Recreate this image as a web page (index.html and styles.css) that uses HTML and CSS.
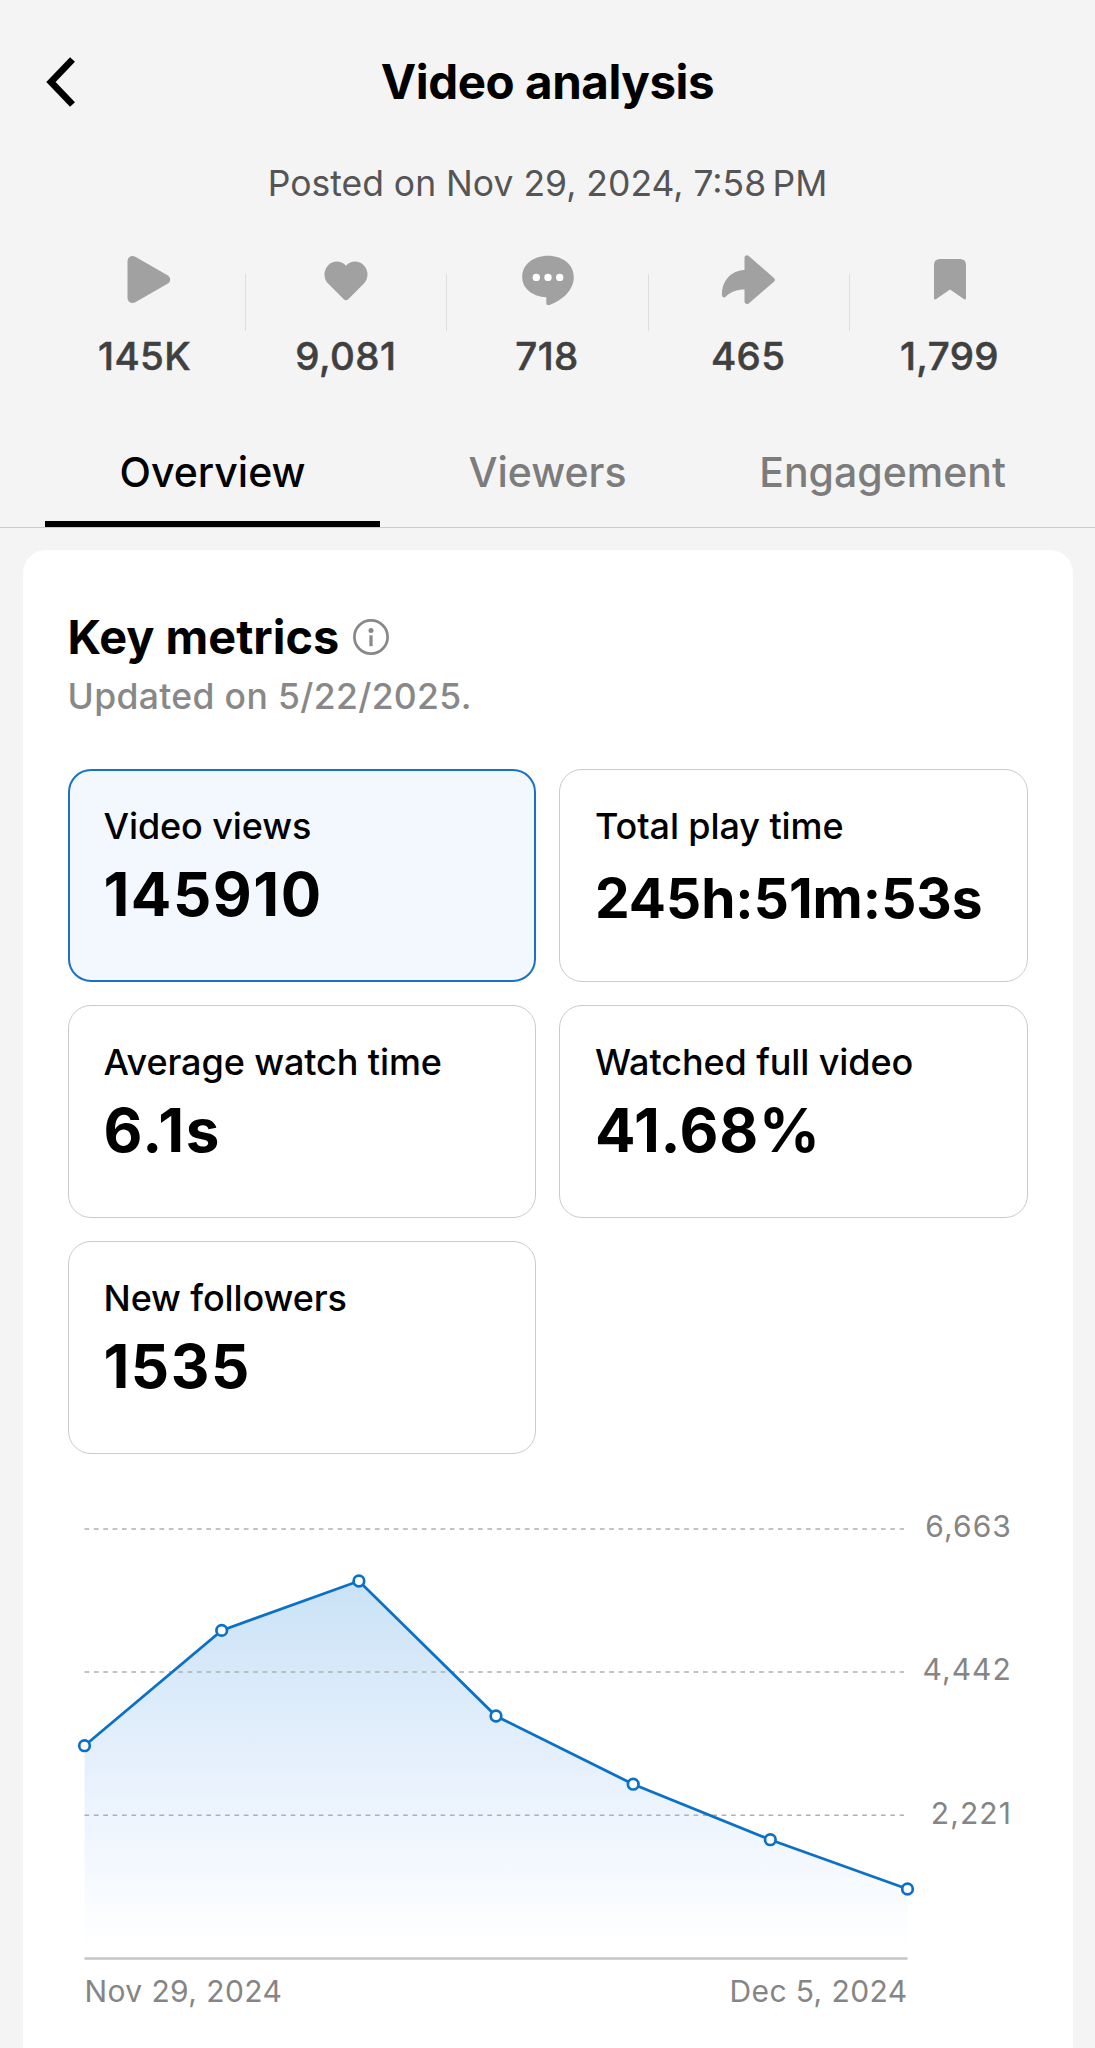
FILE: index.html
```
<!DOCTYPE html>
<html>

<head>
    <meta charset="UTF-8">
    <title>Video analysis</title>
    <link rel="stylesheet" href="styles.css">
</head>

<body>
    <div class="header">
        <svg class="back" width="34" height="56" viewBox="0 0 34 56">
            <path d="M27.5 5.5 L6 28 L27.5 50.5" />
        </svg>
        <h1 class="title">Video analysis</h1>
    </div>
    <div class="posted">Posted on Nov 29, 2024, 7:58&#8239;PM</div>

    <div class="stats">
        <div class="stat">
            <svg class="stat_icon" viewBox="0 0 60 60">
                <path d="M12.5 11.5 C12.5 7 16.5 4.7 20.3 6.8 L52.5 25.2 C56 27.3 56 31.7 52.5 33.8 L20.3 52.2 C16.5 54.3 12.5 52 12.5 47.5 Z" />
            </svg>
            <div class="stat_num">145K</div>
        </div>
        <div class="line"></div>
        <div class="stat">
            <svg class="stat_icon" viewBox="0 0 60 60">
                <path d="M30 15.7 C25 10.3 17 10.3 12.3 15.2 C7.2 20.5 7.2 28.5 12.3 33.8 L27.8 49.2 Q30 51.5 32.2 49.2 L47.7 33.8 C52.8 28.5 52.8 20.5 47.7 15.2 C43 10.3 35 10.3 30 15.7 Z" />
            </svg>
            <div class="stat_num">9,081</div>
        </div>
        <div class="line"></div>
        <div class="stat">
            <svg class="stat_icon" viewBox="0 0 60 60">
                <path d="M30 5.7 C44.5 5.7 55.8 14.3 55.8 27 C55.8 40 44.5 50.5 31.5 54.9 C29.5 55.5 28.3 54.8 28.3 53 V47.2 C14.5 46.6 4.2 38.5 4.2 27 C4.2 14.3 15.5 5.7 30 5.7 Z" />
                <circle class="dot" cx="18.3" cy="27.4" r="3.7" />
                <circle class="dot" cx="30" cy="27.4" r="3.7" />
                <circle class="dot" cx="41.7" cy="27.4" r="3.7" />
            </svg>
            <div class="stat_num">718</div>
        </div>
        <div class="line"></div>
        <div class="stat">
            <svg class="stat_icon" viewBox="0 0 60 60">
                <path d="M25.5 20 V8 C25.5 5.2 28.1 4.3 30 6.2 L54.9 28 C56.3 29.2 56.3 30.6 54.9 31.8 L30 53.2 C28.1 55 25.5 54 25.5 51.3 V39.5 C18 39.5 11.5 41.8 7 46.5 C5 48.4 3 47.5 3 44.5 C3 31.5 11 20.8 25.5 20 Z" />
            </svg>
            <div class="stat_num">465</div>
        </div>
        <div class="line"></div>
        <div class="stat">
            <svg class="stat_icon" viewBox="0 0 60 60">
                <path d="M20 9 H40 Q46 9 46 15 V47.8 Q46 50.3 43.8 48.9 L30 39.5 L16.2 48.9 Q14 50.3 14 47.8 V15 Q14 9 20 9 Z" />
            </svg>
            <div class="stat_num">1,799</div>
        </div>
    </div>

    <div class="tabs">
        <div class="tab active">Overview</div>
        <div class="tab">Viewers</div>
        <div class="tab">Engagement</div>
    </div>

    <div class="card">
        <div class="card_head">
            <h2 class="card_title">Key metrics</h2>
            <svg class="info" width="38" height="38" viewBox="0 0 38 38">
                <circle class="ring" cx="19" cy="19" r="16.6" />
                <circle cx="19" cy="12.4" r="2.5" />
                <rect x="17.4" y="17.4" width="3.2" height="10.8" />
            </svg>
        </div>
        <div class="updated">Updated on 5/22/2025.</div>

        <div class="metrics">
            <div class="metric selected">
                <div class="metric_name">Video views</div>
                <div class="metric_val">145910</div>
            </div>
            <div class="metric">
                <div class="metric_name">Total play time</div>
                <div class="metric_val long">245h:51m:53s</div>
            </div>
            <div class="metric">
                <div class="metric_name">Average watch time</div>
                <div class="metric_val">6.1s</div>
            </div>
            <div class="metric">
                <div class="metric_name">Watched full video</div>
                <div class="metric_val percent">41.68%</div>
            </div>
            <div class="metric">
                <div class="metric_name">New followers</div>
                <div class="metric_val">1535</div>
            </div>
        </div>

        <svg class="chart" width="960" height="540" viewBox="0 0 960 540">
            <defs>
                <linearGradient id="fade" x1="0" y1="0" x2="0" y2="1">
                    <stop offset="0" stop-color="#0075d5" stop-opacity="0.21" />
                    <stop offset="1" stop-color="#2070f0" stop-opacity="0" />
                </linearGradient>
            </defs>
            <polygon fill="url(#fade)" points="16.5,255.7 153.7,140.4 290.9,91 428,226 565.2,294.2 702.3,349.7 839.5,399 839.5,458 16.5,458" />
            <!-- grid -->
            <path class="grid" d="M16.5 39 H836 M16.5 182 H836 M16.5 325.3 H836" />
            <path class="axis" d="M16.5 468.5 H839.5" />
            <!-- views per day -->
            <polyline class="trend" points="16.5,255.7 153.7,140.4 290.9,91 428,226 565.2,294.2 702.3,349.7 839.5,399" />
            <g class="points">
                <circle cx="16.5" cy="255.7" r="5.3" />
                <circle cx="153.7" cy="140.4" r="5.3" />
                <circle cx="290.9" cy="91" r="5.3" />
                <circle cx="428" cy="226" r="5.3" />
                <circle cx="565.2" cy="294.2" r="5.3" />
                <circle cx="702.3" cy="349.7" r="5.3" />
                <circle cx="839.5" cy="399" r="5.3" />
            </g>
            <text class="num" x="944" y="47">6,663</text>
            <text class="num" x="944" y="190">4,442</text>
            <text class="num" x="944" y="333.5">2,221</text>
            <text class="date" x="16.5" y="512.3">Nov 29, 2024</text>
            <text class="date end" x="839.5" y="512.3">Dec 5, 2024</text>
        </svg>
    </div>
</body>

</html>
```
FILE: styles.css
```
body {
    margin: 0;
    background-color: #f4f4f4;
    font-family: Inter, "Liberation Sans", sans-serif;
    color: #000;
    overflow: hidden;
}

h1,
h2 {
    margin: 0;
}

.header {
    display: grid;
    grid-template-columns: 1fr auto 1fr;
    align-items: center;
    height: 153px;
    padding: 5px 45px 1px;
}

.back {
    fill: none;
    stroke: #000;
    stroke-width: 6.8;
}

.title {
    font-size: 47.5px;
    line-height: 60px;
    letter-spacing: -0.45px;
}

.posted {
    font-size: 35.5px;
    line-height: 50px;
    text-align: center;
    color: #555;
}

.stats {
    display: flex;
    padding: 41px 45px 0;
}

.stat {
    flex: 1;
    text-align: center;
}

.stat_icon {
    display: block;
    width: 60px;
    height: 60px;
    margin: 0 auto 21px;
    fill: #a1a1a1;
}

.dot {
    fill: #fff;
}

.stat_num {
    padding-right: 1px;
    font-size: 38.5px;
    font-weight: 500;
    line-height: 50px;
    letter-spacing: 0.4px;
    color: #404040;
    -webkit-text-stroke: 0.5px #404040;
}

.line {
    width: 1px;
    height: 57px;
    margin-top: 24px;
    background-color: #dedede;
}

.tabs {
    display: flex;
    margin-top: 42px;
    padding: 0 45px;
    border-bottom: 1px solid #cbcbcb;
}

.tab {
    flex: 1;
    border-bottom: 6px solid transparent;
    text-align: center;
    font-size: 41px;
    font-weight: 500;
    line-height: 98px;
    color: #7c7c7c;
}

.active {
    color: #000;
    border-color: #000;
}

.card {
    margin: 22px 22.5px 0;
    padding: 57px 45px 40px;
    border-radius: 23px 23px 0 0;
    background-color: #fff;
}

.card_head {
    display: flex;
    align-items: center;
    height: 60px;
}

.card_title {
    font-size: 46.8px;
}

.info {
    margin-left: 12.5px;
    fill: #888;
}

.ring {
    fill: none;
    stroke: #888;
    stroke-width: 2.7;
}

.updated {
    margin-top: 5px;
    font-size: 35.5px;
    font-weight: 500;
    line-height: 50px;
    letter-spacing: 0.35px;
    color: #888;
}

.metrics {
    display: grid;
    grid-template-columns: 1fr 1fr;
    grid-auto-rows: 213px;
    gap: 23px;
    margin-top: 47px;
}

.metric {
    box-sizing: border-box;
    padding: 31px 35px 0;
    border: 1px solid #cacaca;
    border-radius: 23px;
}

.selected {
    padding: 30px 34px 0;
    border: 2px solid #1a73c2;
    background-color: #f3f7fe;
}

.metric_name {
    font-size: 36px;
    font-weight: 500;
    line-height: 50px;
    letter-spacing: -0.1px;
}

.metric_val {
    margin-top: 8px;
    font-size: 60px;
    font-weight: 700;
    line-height: 70px;
    letter-spacing: 1.5px;
}

.percent {
    letter-spacing: 0.7px;
}

.long {
    font-size: 55px;
    line-height: 78px;
    letter-spacing: 0;
}

.chart {
    display: block;
    margin-top: 36px;
}

.grid {
    stroke: #b0b0b0;
    stroke-width: 1.5;
    stroke-dasharray: 4.7 4.67;
}

.axis {
    stroke: #c6c6c6;
    stroke-width: 2.5;
}

.trend {
    fill: none;
    stroke: #0a70c8;
    stroke-width: 2.8;
}

.points {
    fill: #fff;
    stroke: #0a70c8;
    stroke-width: 2.7;
}

.num,
.date {
    font-size: 30px;
    fill: #858585;
    letter-spacing: 0.4px;
}

.num {
    letter-spacing: 1.1px;
    text-anchor: end;
}

.end {
    text-anchor: end;
}
```
